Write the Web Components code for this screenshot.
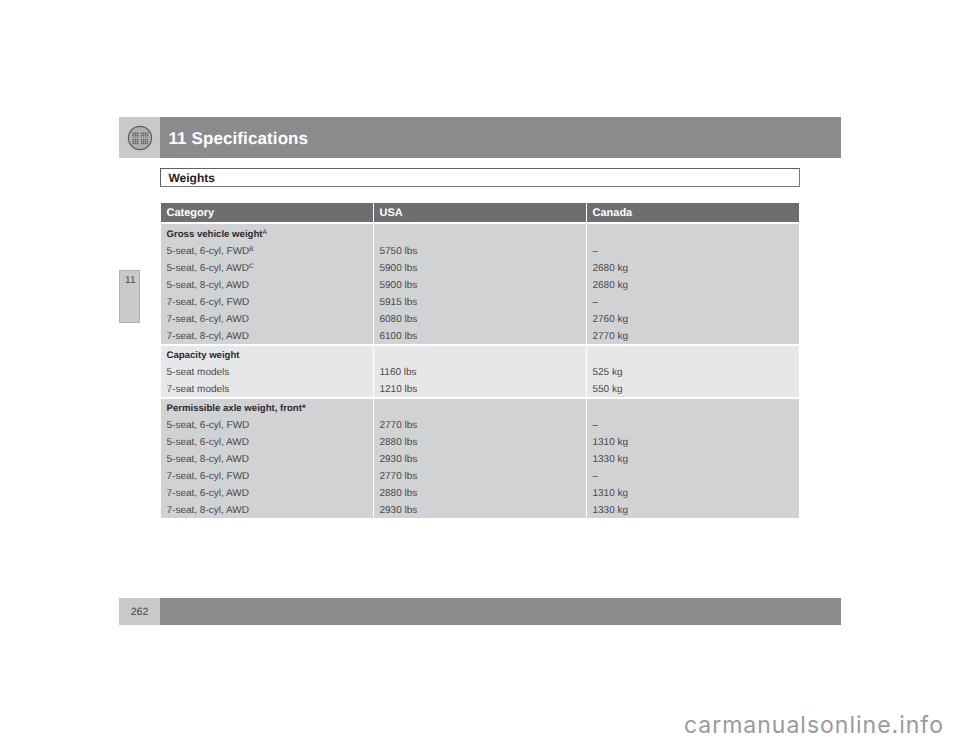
<!DOCTYPE html>
<html><head><meta charset="utf-8">
<style>html,body{margin:0;padding:0;background:#fff}body{font-family:"Liberation Sans",Arial,sans-serif}</style>
</head><body>
<manual-page></manual-page>
<script>
class ChapterHead extends HTMLElement{constructor(){super();this.attachShadow({mode:'open'}).innerHTML=`<style>
:host{display:flex;height:41px;margin-left:119px;width:722px;background:#8a8b8d}
.k{width:41px;background:#c8c9cb;display:flex;align-items:center;justify-content:center}
.t{padding-left:8.5px;font:bold 17px/43px "Liberation Sans",sans-serif;color:#fff;letter-spacing:.1px;text-rendering:geometricPrecision}
svg{display:block}
</style><div class="k"><svg width="26" height="26" viewBox="0 0 26 26"><defs><pattern id="d" width="2" height="2" patternUnits="userSpaceOnUse"><rect width="1.4" height="1.4" fill="#5c5d5f"/></pattern></defs><circle cx="13" cy="13" r="11.6" fill="#adaeb0" stroke="#5a5b5d" stroke-width="1.2"/><g fill="url(#d)"><rect x="5" y="7" width="7" height="5.4"/><rect x="14" y="7" width="7" height="5.4"/><rect x="5" y="14" width="7" height="5.4"/><rect x="14" y="14" width="7" height="5.4"/></g></svg></div><div class="t"><slot></slot></div>`}}
customElements.define('chapter-head',ChapterHead);
class SectionTitle extends HTMLElement{constructor(){super();this.attachShadow({mode:'open'}).innerHTML=`<style>
:host{display:block;box-sizing:border-box;margin:10px 0 0 160px;width:640px;height:19px;border:1px solid #5f6062;border-right-color:#77787a;border-bottom-color:#77787a;background:#fff;padding-left:7.5px;font:bold 12px/18px "Liberation Sans",sans-serif;color:#231f20;text-rendering:geometricPrecision}
</style><slot></slot>`}}
customElements.define('section-title',SectionTitle);
class SpecTable extends HTMLElement{constructor(){super();this.attachShadow({mode:'open'}).innerHTML=`<style>
:host{display:grid;row-gap:2px;margin:16px 0 0 161px;width:638px}
</style><slot></slot>`}}
customElements.define('spec-table',SpecTable);
class SpecRow extends HTMLElement{constructor(){super();const tone=this.getAttribute('tone')||'a';const bg={h:'#6d6e70',a:'#d1d2d4',b:'#e6e7e8'}[tone];const h=tone==='h';
const H=this.getAttribute('h'),P=this.getAttribute('p')||0;
this.attachShadow({mode:'open'}).innerHTML=`<style>
:host{display:grid;grid-template-columns:212px 212px 212px;column-gap:1px;height:${H}px;font:${h?'bold 11px/19px':'10px/17px'} "Liberation Sans",sans-serif;color:${h?'#fff':'#47484a'};text-rendering:geometricPrecision}
::slotted(div){background:${bg};padding:${P}px 0 0 5.5px;height:${H}px;box-sizing:border-box}
</style><slot></slot>`}}
customElements.define('spec-row',SpecRow);
class WaterMark extends HTMLElement{constructor(){super();this.attachShadow({mode:'open'}).innerHTML=`<style>
:host{display:block;text-align:right;margin-top:85px;padding-right:16px;font:23px/30px Inter,"Liberation Sans",sans-serif;letter-spacing:1px;color:#9a9a9a}
</style><slot></slot>`}}
customElements.define('water-mark',WaterMark);
class ManualPage extends HTMLElement{constructor(){super();
const L=`5-seat, 6-cyl, FWD|5-seat, 6-cyl, AWD|5-seat, 8-cyl, AWD|7-seat, 6-cyl, FWD|7-seat, 6-cyl, AWD|7-seat, 8-cyl, AWD`.split('|');
const lines=a=>a.map(x=>`<span style="display:block;height:17px">${x}</span>`).join('');
this.attachShadow({mode:'open'}).innerHTML=`<style>
:host{display:block;padding-top:117px;width:960px;height:742px;box-sizing:border-box;overflow:hidden;font-family:"Liberation Sans",sans-serif}
b{font-weight:bold;font-size:9.6px;color:#2c2c2e}sup{font-size:6.5px;line-height:0;vertical-align:3.5px;font-weight:normal}
.mid{display:flex;height:0}.tab{margin:112px 0 0 119px;width:21px;height:53px;box-sizing:border-box;background:#c8c9cb;border:1px solid #b0b1b3;border-top-color:#a9aaac;font:10px/17px "Liberation Sans",sans-serif;color:#47484a;text-align:right;padding:1px 3.5px 0 0;text-rendering:geometricPrecision}
.foot{display:flex;margin:80px 0 0 119px;width:722px;height:27px;background:#8a8b8d}
.foot div{width:41px;background:#c8c9cb;font:10.6px/28px "Liberation Sans",sans-serif;color:#47484a;text-align:center;text-rendering:geometricPrecision}
</style>
<chapter-head>11 Specifications</chapter-head>
<div class="mid"><div class="tab">11</div></div>
<section-title>Weights</section-title>
<spec-table>
<spec-row tone="h" h="19" p="1"><div>Category</div><div>USA</div><div>Canada</div></spec-row>
<spec-row tone="a" h="120" p="2"><div>${lines(['<b>Gross vehicle weight<sup>A</sup></b>',L[0]+'<sup>B</sup>',L[1]+'<sup>C</sup>',L[2],L[3],L[4],L[5]])}</div><div>${lines(['','5750 lbs','5900 lbs','5900 lbs','5915 lbs','6080 lbs','6100 lbs'])}</div><div>${lines(['','–','2680 kg','2680 kg','–','2760 kg','2770 kg'])}</div></spec-row>
<spec-row tone="b" h="51" p="1"><div>${lines(['<b>Capacity weight</b>','5-seat models','7-seat models'])}</div><div>${lines(['','1160 lbs','1210 lbs'])}</div><div>${lines(['','525 kg','550 kg'])}</div></spec-row>
<spec-row tone="a" h="119" p="1"><div>${lines(['<b>Permissible axle weight, front*</b>',...L])}</div><div>${lines(['','2770 lbs','2880 lbs','2930 lbs','2770 lbs','2880 lbs','2930 lbs'])}</div><div>${lines(['','–','1310 kg','1330 kg','–','1310 kg','1330 kg'])}</div></spec-row>
</spec-table>
<div class="foot"><div>262</div></div>
<water-mark>carmanualsonline.info</water-mark>`}}
customElements.define('manual-page',ManualPage);
</script>
</body></html>
